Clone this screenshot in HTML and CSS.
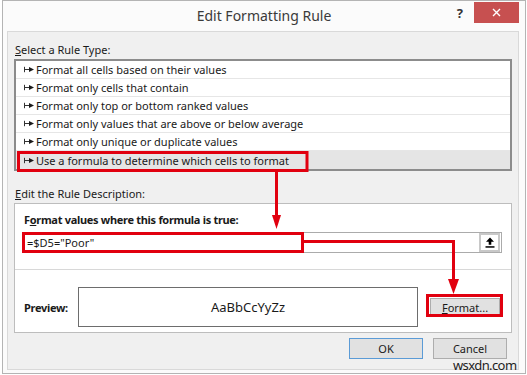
FILE: index.html
```html
<!DOCTYPE html>
<html lang="en">
<head>
    <meta charset="UTF-8">
    <meta name="viewport" content="width=device-width, initial-scale=1.0">
    <title>Edit Formatting Rule</title>
    <link rel="stylesheet" href="styles.css">
</head>
<body>

    <svg class="defs" width="0" height="0">
        <symbol id="bullet" viewBox="0 0 10 7">
            <rect x="0" y="0.8" width="1" height="5.4" fill="#333"/>
            <rect x="0" y="3" width="6" height="1" fill="#333"/>
            <polygon points="5,1 10,3.5 5,6" fill="#1a1a1a"/>
        </symbol>
    </svg>

    <div class="window">
        <div class="titlebar">
            <div></div>
            <div class="title">Edit Formatting Rule</div>
            <div class="controls">
                <span class="help">?</span>
                <span class="close">
                    <svg width="9" height="9" viewBox="0 0 9 9"><path d="M1 1L8 8M8 1L1 8" stroke="#fff" stroke-width="1.4"/></svg>
                </span>
            </div>
        </div>

        <div class="panel">
            <div class="section-label"><u>S</u>elect a Rule Type:</div>
            <div class="rule-list">
                <div class="rule"><svg class="bullet"><use href="#bullet"/></svg>Format all cells based on their values</div>
                <div class="rule"><svg class="bullet"><use href="#bullet"/></svg>Format only cells that contain</div>
                <div class="rule"><svg class="bullet"><use href="#bullet"/></svg>Format only top or bottom ranked values</div>
                <div class="rule"><svg class="bullet"><use href="#bullet"/></svg>Format only values that are above or below average</div>
                <div class="rule"><svg class="bullet"><use href="#bullet"/></svg>Format only unique or duplicate values</div>
                <div class="rule selected"><svg class="bullet"><use href="#bullet"/></svg>Use a formula to determine which cells to format</div>
            </div>

            <div class="section-label second"><u>E</u>dit the Rule Description:</div>
            <div class="description">
                <div class="desc-top">
                    <div class="desc-title">F<u>o</u>rmat values where this formula is true:</div>
                    <div class="formula">
                        <span class="formula-text">=$D5="Poor"</span>
                        <span class="collapse">
                            <svg width="10" height="11" viewBox="0 0 10 11"><polygon points="5,0.5 9,4.8 6.3,4.8 6.3,7.8 3.7,7.8 3.7,4.8 1,4.8" fill="#000"/><rect x="0.5" y="9.2" width="9" height="1.5" fill="#000"/></svg>
                        </span>
                    </div>
                </div>
                <div class="desc-bottom">
                    <span class="preview-label">Preview:</span>
                    <div class="preview-box">AaBbCcYyZz</div>
                    <button class="btn format-btn"><u>F</u>ormat...</button>
                </div>
            </div>

            <div class="actions">
                <button class="btn ok">OK</button>
                <button class="btn">Cancel</button>
            </div>
        </div>
    </div>

    <!-- red callouts drawn over the dialog -->
    <svg class="annotations" width="527" height="375" viewBox="0 0 527 375">
        <g fill="none" stroke="#e1000f" stroke-width="3">
            <rect x="18.5" y="152.5" width="288.5" height="18"/>
            <rect x="23.5" y="233.5" width="279" height="18"/>
            <rect x="427.5" y="295.5" width="74" height="20"/>
            <path d="M276.5 172V216"/>
            <path d="M304 241.5H453.5V280"/>
        </g>
        <g fill="#e1000f">
            <polygon points="272,215 281,215 276.5,229"/>
            <polygon points="448,279 459,279 453.5,294"/>
        </g>
    </svg>

    <div class="watermark">wsxdn.com</div>

</body>
</html>
```

FILE: styles.css
```css
body {
    margin: 0;
    width: 527px;
    height: 375px;
    overflow: hidden;
    position: relative;
    background-color: #fff;
    font-family: "Noto Sans", sans-serif;
    font-size: 11px;
    color: #1a1a1a;
}

.defs {
    position: absolute;
}

.window {
    margin-left: 2px;
    width: 524px;
    height: 374px;
    box-sizing: border-box;
    border: 1px solid #b4b4b4;
    background-color: #fbfbfb;
    display: flex;
    flex-direction: column;
}

.titlebar {
    height: 30px;
    flex-shrink: 0;
    display: grid;
    grid-template-columns: 1fr auto 1fr;
}

.title {
    font-size: 14px;
    line-height: 30px;
    color: #3a3a3a;
}

.controls {
    display: flex;
    justify-content: flex-end;
    align-items: flex-start;
    gap: 11px;
    margin-right: 6px;
}

.help {
    font-weight: bold;
    font-size: 13px;
    line-height: 18px;
    margin-top: 3px;
    color: #333;
}

.close {
    width: 45px;
    height: 21px;
    margin-top: 1px;
    background-color: #c75050;
    display: flex;
    align-items: center;
    justify-content: center;
}

.panel {
    flex: 1;
    margin: 0 6px 3px 4px;
    padding: 0 6px;
    border: 1px solid #d9d9d9;
    background-color: #f0f0f0;
    display: flex;
    flex-direction: column;
}

.section-label {
    line-height: 16px;
    margin-top: 10px;
    margin-bottom: 1px;
    padding-left: 1px;
}

.section-label.second {
    margin-top: 15px;
}

.rule-list {
    border: 2px solid #8c8c8c;
    background-color: #fff;
}

.rule {
    height: 18px;
    box-sizing: border-box;
    border-bottom: 1px solid #e6e6e6;
    padding-left: 8px;
    display: flex;
    align-items: center;
    gap: 2px;
}

.rule.selected {
    background-color: #e5e5e5;
    border-bottom: none;
}

.bullet {
    width: 10px;
    height: 7px;
}

.description {
    border: 1px solid #bdbdbd;
    background-color: #fff;
}

.desc-top {
    padding: 8px 9px 16px 7px;
    border-bottom: 1px solid #d8d8d8;
}

.desc-title {
    font-weight: bold;
    line-height: 16px;
    letter-spacing: -0.3px;
    padding-left: 2px;
    margin-bottom: 4px;
}

.formula {
    height: 21px;
    box-sizing: border-box;
    border: 1px solid #ababab;
    display: flex;
    align-items: center;
}

.formula-text {
    flex: 1;
    padding-left: 4px;
}

.collapse {
    width: 21px;
    height: 19px;
    margin-right: 1px;
    box-sizing: border-box;
    border: 2px solid #c8c8c8;
    background-color: #fff;
    display: flex;
    align-items: center;
    justify-content: center;
}

.desc-bottom {
    display: flex;
    align-items: center;
    padding: 17px 0 5px 9px;
}

.preview-label {
    width: 54px;
    font-weight: bold;
    letter-spacing: -0.3px;
}

.preview-box {
    width: 340px;
    height: 40px;
    box-sizing: border-box;
    border: 1px solid #6d6d6d;
    display: flex;
    align-items: center;
    justify-content: center;
    font-size: 13px;
}

.btn {
    font-family: inherit;
    font-size: 11px;
    color: #1a1a1a;
    background-color: #e1e1e1;
    border: 1px solid #adadad;
    padding: 0;
}

.format-btn {
    margin-left: 12px;
    width: 70px;
    height: 18px;
}

.actions {
    display: flex;
    justify-content: flex-end;
    gap: 10px;
    margin-top: 5px;
    padding-right: 5px;
}

.actions .btn {
    width: 74px;
    height: 21px;
}

.btn.ok {
    border-color: #5b9bd6;
}

.annotations {
    position: absolute;
    left: 0;
    top: 0;
    pointer-events: none;
}

.watermark {
    position: absolute;
    left: 453px;
    top: 357px;
    font-size: 13px;
    line-height: 16px;
    letter-spacing: -0.6px;
    color: #1e1e1e;
}
```
